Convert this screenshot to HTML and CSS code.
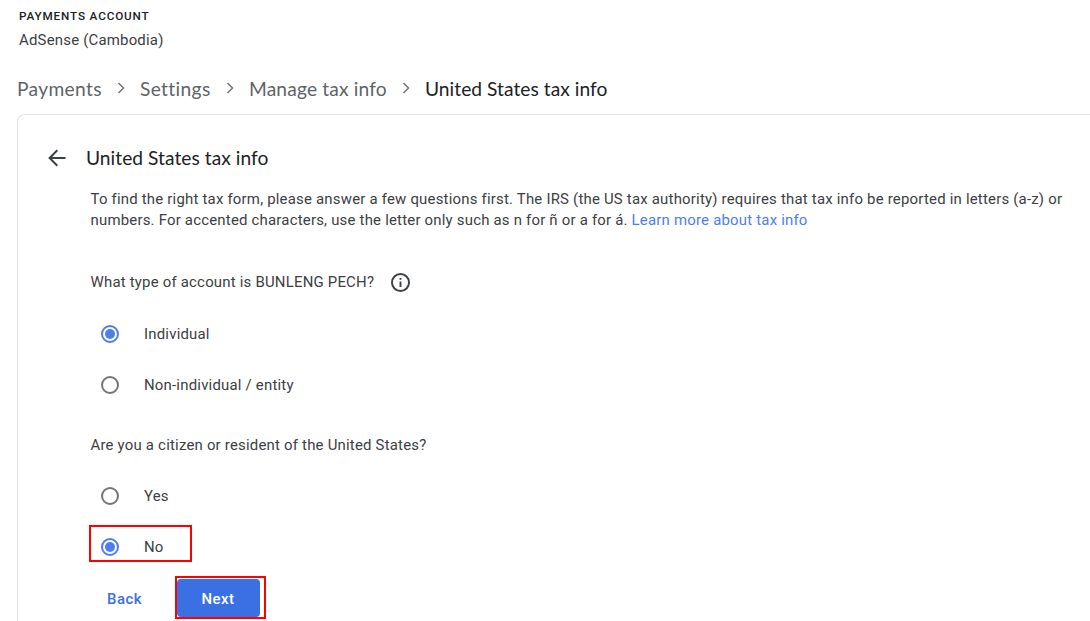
FILE: index.html
```html
<!DOCTYPE html>
<html lang="en">
  <head>
    <meta charset="utf-8">
    <title>United States tax info</title>
    <link rel="stylesheet" href="styles.css">
  </head>
  <body>
    <header class="account">
      <div class="account-label">PAYMENTS ACCOUNT</div>
      <div class="account-name">AdSense (Cambodia)</div>
    </header>

    <nav class="breadcrumbs">
      <span class="crumb crumb-payments">Payments</span>
      <svg class="chevron" viewBox="0 0 8 12"><path d="M1.5 1l5 5-5 5" /></svg>
      <span class="crumb crumb-settings">Settings</span>
      <svg class="chevron" viewBox="0 0 8 12"><path d="M1.5 1l5 5-5 5" /></svg>
      <span class="crumb crumb-manage">Manage tax info</span>
      <svg class="chevron" viewBox="0 0 8 12"><path d="M1.5 1l5 5-5 5" /></svg>
      <span class="crumb current">United States tax info</span>
    </nav>

    <main class="card">
      <div class="card-header">
        <svg class="back-arrow" viewBox="0 0 18 18">
          <path d="M17.5 9H1.8M9.3 1.3L1.6 9l7.7 7.7" />
        </svg>
        <h1>United States tax info</h1>
      </div>

      <div class="form">
        <p class="intro">
          To find the right tax form, please answer a few questions first. The IRS (the US tax authority) requires that tax info be reported in letters (a-z) or<br>
          numbers. For accented characters, use the letter only such as n for ñ or a for á.
          <a class="link">Learn more about tax info</a>
        </p>

        <div class="question">
          What type of account is BUNLENG PECH?
          <svg class="info-icon" viewBox="0 0 18 18">
            <circle cx="9" cy="9" r="8.1" />
            <path d="M9 8v5.2M9 4.7v1.8" />
          </svg>
        </div>
        <label class="option"><span class="radio checked"></span>Individual</label>
        <label class="option"><span class="radio"></span>Non-individual / entity</label>

        <div class="question second">Are you a citizen or resident of the United States?</div>
        <label class="option"><span class="radio"></span>Yes</label>
        <label class="option marked"><span class="radio checked"></span>No</label>

        <div class="actions">
          <button class="btn-back">Back</button>
          <div class="next-frame"><button class="btn-next">Next</button></div>
        </div>
      </div>
    </main>
  </body>
</html>
```

FILE: styles.css
```css
:root {
  --text: #3c4043;
  --heading: #202124;
  --muted: #5f6368;
  --blue: #4d7df2;
  --primary: #3b70e4;
  --border: #e3e3e3;
  --mark: #ff0000;
}

* {
  box-sizing: border-box;
}

body {
  margin: 0;
  height: 621px;
  overflow: hidden;
  background: #fff;
  color: var(--text);
  font-family: Roboto, Arial, sans-serif;
  font-size: 14.93px;
  line-height: 21.33px;
  letter-spacing: 0.213px;
}

.account {
  padding: 8px 0 0 19px;
}

.account-label {
  height: 16px;
  line-height: 16px;
  color: var(--heading);
  font-size: 11.73px;
  font-weight: 500;
  letter-spacing: 0.85px;
}

.account-name {
  height: 22px;
  margin-top: 6px;
}

/* Breadcrumbs */
.breadcrumbs {
  display: flex;
  align-items: center;
  height: 28px;
  margin: 23px 0 0 17px;
  color: var(--muted);
  font-family: Lato, sans-serif;
  font-size: 19.2px;
  letter-spacing: 0.15px;
  white-space: nowrap;
}

.crumb-payments {
  width: 85px;
  letter-spacing: 0.35px;
}

.crumb-settings {
  width: 71px;
  letter-spacing: 0.35px;
}

.crumb-manage {
  width: 138px;
}

.current {
  color: var(--heading);
  letter-spacing: 0.04px;
}

.chevron {
  flex: none;
  width: 8px;
  height: 12px;
  margin: 0 15px 3px 15px;
  fill: none;
  stroke: #70757a;
  stroke-width: 1.5;
}

/* Card */
.card {
  height: 507px;
  margin: 11px 0 0 17px;
  padding: 29px 0 0 29px;
  border: 1px solid var(--border);
  border-width: 1px 0 0 1px;
  border-radius: 8px 0 0 0;
}

.card-header {
  display: flex;
  align-items: center;
  height: 28px;
}

.back-arrow {
  width: 18px;
  height: 18px;
  margin: 0 20px 0 1px;
  fill: none;
  stroke: #3c4043;
  stroke-width: 2;
}

h1 {
  margin: 0;
  color: var(--heading);
  font-family: Lato, sans-serif;
  font-size: 19.2px;
  font-weight: 400;
  letter-spacing: 0.04px;
}

.form {
  padding-left: 43.5px;
}

.intro {
  margin: 16.5px 0 0;
  white-space: nowrap;
}

.link {
  color: var(--blue);
}

.question {
  display: flex;
  align-items: center;
  gap: 17px;
  height: 22px;
  margin: 41px 0 21px;
}

.question.second {
  margin: 32px 0 20px;
}

.info-icon {
  width: 19px;
  height: 19px;
  margin-bottom: 1px;
  fill: none;
  stroke: #3c4043;
  stroke-width: 1.8;
}

.option {
  display: flex;
  align-items: center;
  gap: 25px;
  width: 300px;
  height: 37px;
  margin-bottom: 14px;
  padding: 2px 0 0 10.5px;
}

/* Radio buttons */
.radio {
  display: flex;
  align-items: center;
  justify-content: center;
  width: 18px;
  height: 18px;
  margin-bottom: 2px;
  border: 2px solid #757575;
  border-radius: 50%;
}

.radio.checked {
  border-color: var(--blue);
}

.radio.checked::before {
  content: "";
  width: 10px;
  height: 10px;
  border-radius: 50%;
  background: var(--blue);
}

.marked {
  width: 103px;
  margin: -3px 0 0 -1.5px;
  padding: 8px 0 0 10px;
  border: 2px solid var(--mark);
}

/* Buttons */
.actions {
  display: flex;
  align-items: center;
  margin-top: 14px;
}

button {
  padding: 2px 0 0;
  border: 0;
  background: none;
  font-family: Roboto, Arial, sans-serif;
  font-size: 14.93px;
  font-weight: 500;
  letter-spacing: 0.5px;
}

.btn-back {
  width: 68px;
  height: 38px;
  color: var(--primary);
}

.next-frame {
  width: 91px;
  height: 43px;
  margin-left: 16px;
  padding-top: 1px;
  border: 2px solid var(--mark);
}

.btn-next {
  display: block;
  width: 83px;
  height: 38px;
  border-radius: 4px;
  background: var(--primary);
  color: #fff;
}
```
